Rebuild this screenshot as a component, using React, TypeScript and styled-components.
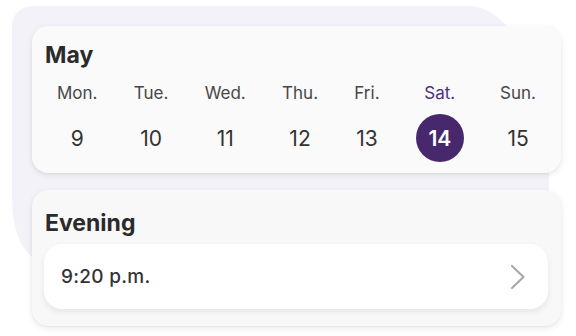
import { createGlobalStyle, styled } from "styled-components";

const GlobalStyle = createGlobalStyle`
  html, body {
    margin: 0;
    padding: 0;
    background: #ffffff;
  }
  body {
    font-family: Inter, "Liberation Sans", Arial, sans-serif;
    color: #333333;
  }
`;

const Stage = styled.div`
  position: relative;
  isolation: isolate;
  width: 576px;
  height: 336px;
  padding: 26px 0 0 32px;
  box-sizing: border-box;
  display: flex;
  flex-direction: column;
  gap: 17px;

  &::before {
    content: "";
    position: absolute;
    left: 12px;
    top: 6px;
    width: 537px;
    height: 254px;
    background: #f3f2f8;
    border-radius: 20px 80px 0 30px / 20px 170px 0 60px;
    z-index: -1;
  }
`;

const Card = styled.section<{ $tone: string; $height: number }>`
  width: 529px;
  height: ${(p) => p.$height}px;
  box-sizing: border-box;
  background: ${(p) => p.$tone};
  border-radius: 16px;
  box-shadow: 0 2px 6px rgba(0, 0, 0, 0.09), 0 1px 2px rgba(0, 0, 0, 0.04);
  display: flex;
  flex-direction: column;
`;

const CalendarCard = styled(Card)`
  padding: 15px 13px 11px 13px;
`;

const SlotCard = styled(Card)`
  padding: 19px 13px 17px 12px;
`;

const Heading = styled.h2<{ $indent: number }>`
  margin: 0 0 0 ${(p) => p.$indent}px;
  font-size: 23px;
  line-height: 28px;
  font-weight: 700;
  color: #2a2a2a;
`;

const Week = styled.div`
  display: flex;
  justify-content: space-between;
  margin-top: 13px;
  padding: 0 12px;
`;

const DayColumn = styled.div`
  display: flex;
  flex-direction: column;
  align-items: center;
  gap: 10px;
`;

const DayName = styled.span<{ $active: boolean }>`
  font-size: 17px;
  line-height: 22px;
  color: ${(p) => (p.$active ? "#4d2f7c" : "#474747")};
`;

const DayNumber = styled.span<{ $active: boolean }>`
  width: ${(p) => (p.$active ? "48px" : "auto")};
  height: 48px;
  border-radius: 50%;
  display: flex;
  align-items: center;
  justify-content: center;
  font-size: 21px;
  font-weight: ${(p) => (p.$active ? 600 : 400)};
  color: ${(p) => (p.$active ? "#ffffff" : "#333333")};
  background: ${(p) => (p.$active ? "#48286c" : "transparent")};
`;

const SlotRow = styled.button`
  margin-top: 7px;
  height: 65px;
  border: none;
  border-radius: 18px;
  background: #ffffff;
  box-shadow: 0 3px 6px rgba(0, 0, 0, 0.08);
  display: flex;
  align-items: center;
  justify-content: space-between;
  padding: 0 22px 0 17px;
  font-family: inherit;
  cursor: pointer;
`;

const SlotTime = styled.span`
  font-size: 19px;
  font-weight: 500;
  color: #333333;
  letter-spacing: 0.3px;
`;

const days = [
  { name: "Mon.", date: 9 },
  { name: "Tue.", date: 10 },
  { name: "Wed.", date: 11 },
  { name: "Thu.", date: 12 },
  { name: "Fri.", date: 13 },
  { name: "Sat.", date: 14 },
  { name: "Sun.", date: 15 },
];

const selected = 14;

function Chevron() {
  return (
    <svg width="16" height="26" viewBox="0 0 16 26" fill="none">
      <path
        d="M2 2 L13.5 13 L2 24"
        stroke="#a9a9a9"
        strokeWidth="2.2"
        strokeLinecap="round"
        strokeLinejoin="round"
      />
    </svg>
  );
}

export default function App() {
  return (
    <>
      <GlobalStyle />
      <Stage>
        <CalendarCard $tone="#fafafa" $height={147}>
          <Heading $indent={0}>May</Heading>
          <Week>
            {days.map((d) => (
              <DayColumn key={d.date}>
                <DayName $active={d.date === selected}>{d.name}</DayName>
                <DayNumber $active={d.date === selected}>{d.date}</DayNumber>
              </DayColumn>
            ))}
          </Week>
        </CalendarCard>
        <SlotCard $tone="#f8f8f9" $height={136}>
          <Heading $indent={1}>Evening</Heading>
          <SlotRow>
            <SlotTime>9:20 p.m.</SlotTime>
            <Chevron />
          </SlotRow>
        </SlotCard>
      </Stage>
    </>
  );
}
